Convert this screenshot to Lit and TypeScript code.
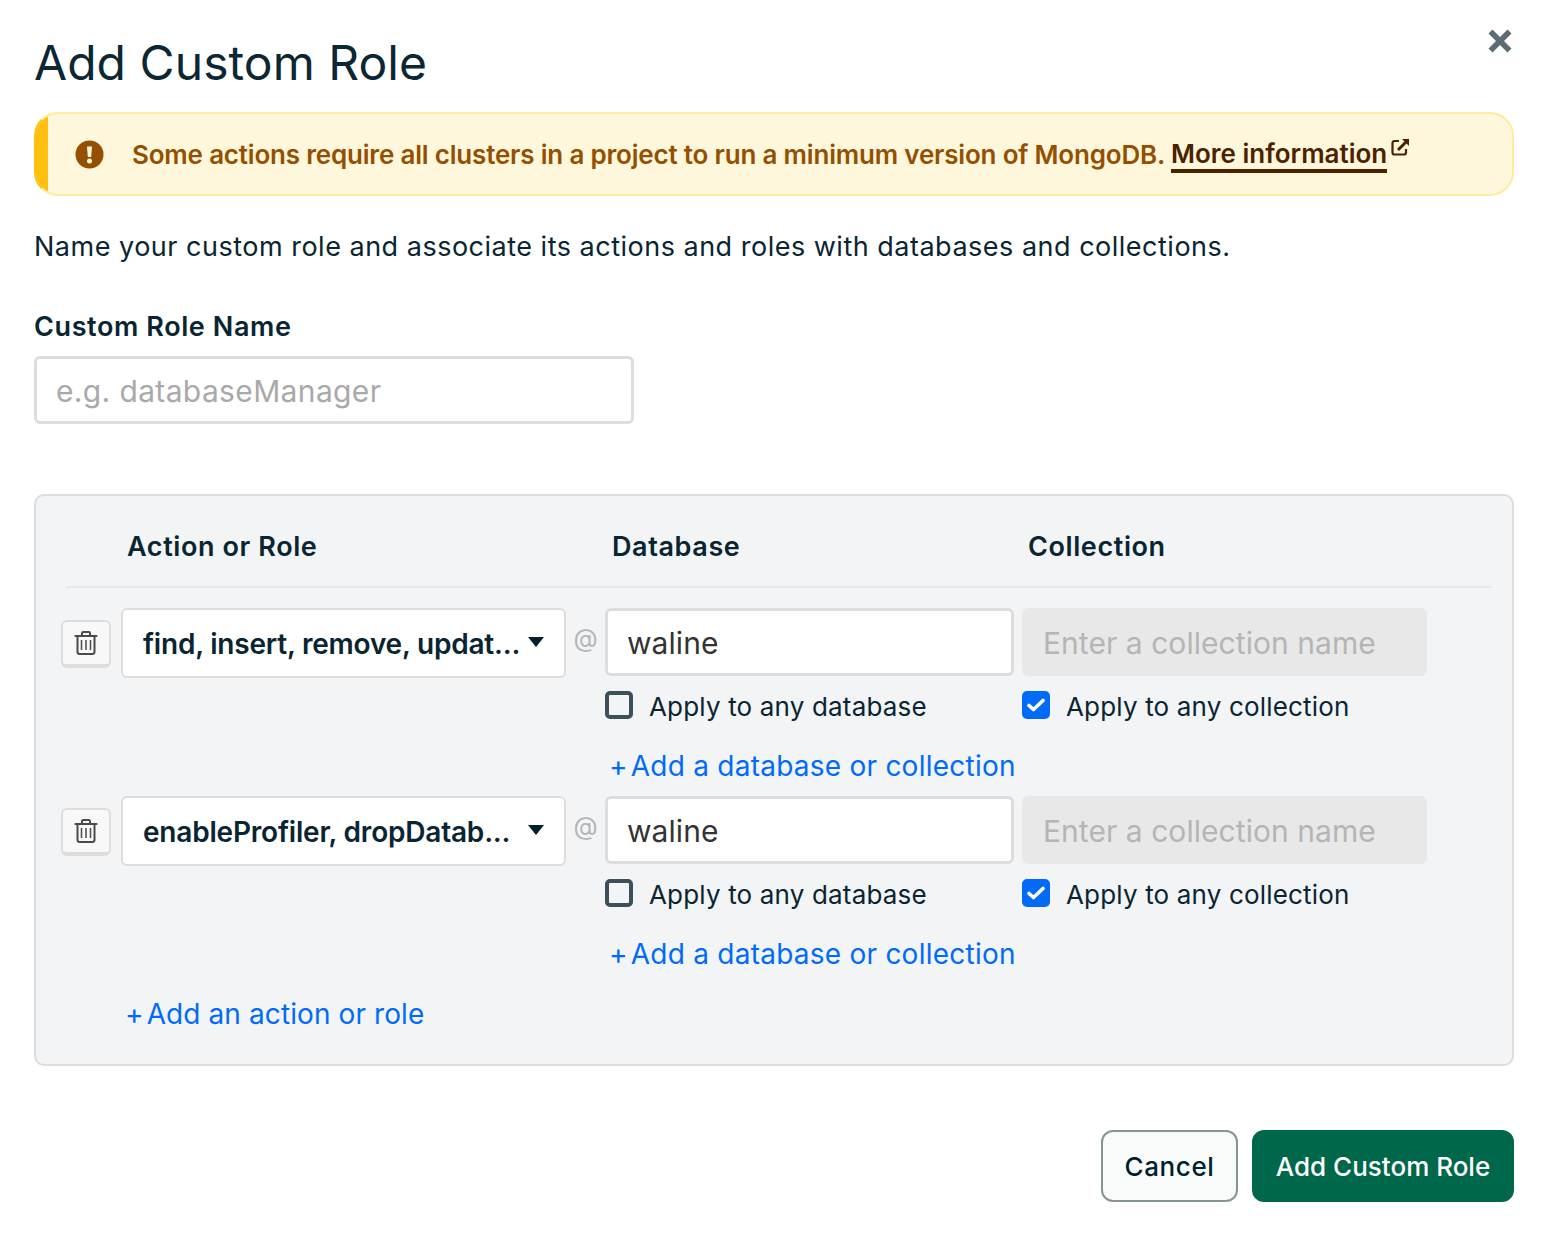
import { LitElement, html, css } from 'lit';
import { customElement, state } from 'lit/decorators.js';

const trash = html`<svg width="24" height="26" viewBox="0 0 24 26" fill="none" stroke="#4a4a4a" stroke-width="2">
  <path d="M1.500 6h21" stroke-width="2.200" stroke-linecap="round"/>
  <path d="M8 5.500V3.200C8 2.500 8.500 2 9.200 2h5.600c.7 0 1.200.5 1.200 1.200v2.300"/>
  <path d="M3.500 6.500v15.300c0 1.300 1 2.200 2.200 2.200h12.600c1.200 0 2.200-.9 2.200-2.200V6.500"/>
  <path d="M7.500 10v10M12 10v10M16.500 10v10" stroke-width="1.500"/>
</svg>`;

const caret = html`<svg class="caret" width="16" height="10" viewBox="0 0 16 10"><path d="M0 0h16L8 10z" fill="#001e2b"/></svg>`;

@customElement('app-root')
export class AppRoot extends LitElement {
  @state() rows = [
    { action: 'find, insert, remove, updat...' },
    { action: 'enableProfiler, dropDatab...' },
  ];

  static styles = css`
    :host {
      display: block;
      width: 1545px;
      height: 1241px;
      box-sizing: border-box;
      padding: 0 31px 0 34px;
      background: #fff;
      color: #0a2532;
      font-family: Inter, "Noto Sans", sans-serif;
      position: relative;
    }
    h1 {
      margin: 0;
      padding-top: 33px;
      height: 112px;
      box-sizing: border-box;
      font-size: 48px;
      line-height: 60px;
      font-weight: 400;
      letter-spacing: 0.05px;
      color: #0c2734;
    }
    .close {
      position: absolute;
      top: 28px;
      right: 32px;
      width: 26px;
      height: 26px;
    }
    .alert {
      height: 84px;
      box-sizing: border-box;
      border: 2px solid #ffec9e;
      border-left-color: #ffc010;
      border-radius: 24px;
      background: #fef7db;
      display: flex;
      align-items: center;
      overflow: hidden;
      font-size: 26px;
      font-weight: 600;
      color: #944f01;
      letter-spacing: -0.19px;
      white-space: nowrap;
    }
    .alert .bar { width: 12px; height: 100%; background: #ffc010; margin-right: 27px; flex: none; }
    .alert svg.warn { margin-right: 28px; flex: none; }
    .alert a {
      margin: 4px 0 0 6px;
      color: #4c2100;
      text-decoration: none;
      border-bottom: 4px solid #4c2100;
      line-height: 30px;
      letter-spacing: 0;
    }
    .alert .ext { margin: -14px 0 0 4px; flex: none; }
    .desc {
      margin: 34px 0 0;
      font-size: 27px;
      line-height: 34px;
      letter-spacing: 0.5px;
      white-space: nowrap;
    }
    .field-label {
      margin-top: 46px;
      font-size: 27px;
      line-height: 34px;
      font-weight: 600;
      letter-spacing: 0.6px;
    }
    input {
      box-sizing: border-box;
      font-family: inherit;
      font-size: 30px;
      letter-spacing: 0.05px;
      border: 3px solid #dddddd;
      border-radius: 6px;
      padding: 1px 19px 0;
      height: 68px;
      color: #333;
      background: #fff;
      outline: none;
    }
    input::placeholder { color: #a9a9a9; opacity: 1; }
    input:disabled { background: #e8e8e8; border-color: #e8e8e8; padding-left: 18px; }
    input:disabled::placeholder { color: #b5b5b5; }
    .name { width: 600px; margin-top: 12px; display: block; letter-spacing: 0.36px; }
    .panel {
      margin-top: 70px;
      width: 1480px;
      height: 572px;
      box-sizing: border-box;
      border: 2px solid #dddddd;
      border-radius: 10px;
      background: #f3f4f6;
      padding: 0 20px 0 25px;
    }
    .grid {
      display: grid;
      grid-template-columns: 60px 445px 39px 417px 405px;
    }
    .head {
      height: 92px;
      margin-left: 5px;
      border-bottom: 2px solid #e7e8ea;
      box-sizing: border-box;
      grid-template-columns: 61px 485px 416px 1fr;
      align-items: center;
      font-size: 27px;
      font-weight: 600;
      letter-spacing: 0.6px;
      padding-top: 11px;
    }
    .head span:nth-child(2) { grid-column: 2; }
    .row { margin-top: 20px; height: 168px; align-content: start; }
    .del {
      width: 50px;
      height: 48px;
      margin-top: 12px;
      box-sizing: border-box;
      border: 2px solid #dddddd;
      border-bottom-width: 4px;
      border-radius: 6px;
      background: #f8f8f8;
      display: flex;
      align-items: center;
      justify-content: center;
      padding: 0;
    }
    .select {
      height: 70px;
      box-sizing: border-box;
      border: 2px solid #dddddd;
      border-radius: 6px;
      background: #fff;
      display: flex;
      align-items: center;
      justify-content: space-between;
      padding: 2px 20px 0;
      font-size: 28px;
      font-weight: 600;
      letter-spacing: -0.2px;
      white-space: nowrap;
    }
    .caret { margin-top: -4px; flex: none; }
    .at {
      font-size: 25px;
      color: #b5b5b5;
      text-align: center;
      line-height: 60px;
    }
    .col { display: flex; flex-direction: column; }
    .col input { width: 100%; }
    .col.db input { width: 409px; }
    .check {
      margin-top: 14px;
      display: flex;
      align-items: center;
      height: 32px;
      font-size: 26px;
      letter-spacing: 0.17px;
    }
    .box {
      width: 28px;
      height: 28px;
      box-sizing: border-box;
      border: 4px solid #3d4f58;
      border-radius: 5px;
      margin: -2px 16px 0 0;
      flex: none;
    }
    .box.on {
      background: #016bf8;
      border-color: #016bf8;
      display: flex;
      align-items: center;
      justify-content: center;
    }
    .link {
      color: #016bf8;
      font-size: 28px;
      letter-spacing: 0.24px;
      line-height: 36px;
      white-space: nowrap;
    }
    .link .plus { margin-right: 3px; }
    .col .link { margin: 26px 0 0 4px; }
    .add-action { margin: 32px 0 0 64px; letter-spacing: 0.1px; }
    .footer {
      margin-top: 64px;
      display: flex;
      justify-content: flex-end;
      gap: 14px;
    }
    .btn {
      height: 72px;
      box-sizing: border-box;
      border-radius: 12px;
      font-family: inherit;
      font-size: 26px;
      font-weight: 500;
      letter-spacing: 0;
      padding: 0;
    }
    .cancel { width: 137px; border: 2px solid #889397; background: #f9fbfa; color: #001e2b; letter-spacing: 0.6px; }
    .primary { width: 262px; border: 2px solid #00684a; background: #00684a; color: #fff; }
  `;

  renderRow(row: { action: string }) {
    return html`
      <div class="grid row">
        <button class="del">${trash}</button>
        <div class="select"><span>${row.action}</span>${caret}</div>
        <div class="at">@</div>
        <div class="col db">
          <input value="waline" />
          <div class="check"><span class="box"></span>Apply to any database</div>
          <span class="link"><span class="plus">+</span>Add a database or collection</span>
        </div>
        <div class="col">
          <input disabled placeholder="Enter a collection name" />
          <div class="check">
            <span class="box on">
              <svg width="18" height="14" viewBox="0 0 18 14" fill="none" stroke="#fff" stroke-width="3.6" stroke-linecap="round" stroke-linejoin="round"><path d="M2 7.500l4.500 4L16 2.500"/></svg>
            </span>
            Apply to any collection
          </div>
        </div>
      </div>
    `;
  }

  render() {
    return html`
      <h1>Add Custom Role</h1>
      <svg class="close" viewBox="0 0 26 26" fill="#5d6c74">
        <path d="M5.500 1.500L13 9l7.500-7.500 4 4L17 13l7.500 7.500-4 4L13 17l-7.500 7.500-4-4L9 13 1.500 5.500z"/>
      </svg>
      <div class="alert">
        <span class="bar"></span>
        <svg class="warn" width="29" height="29" viewBox="0 0 29 29">
          <circle cx="14.500" cy="14.500" r="14" fill="#944f01"/>
          <path d="M12 6.500h5l-.8 10.500h-3.400z" fill="#fef7db"/>
          <circle cx="14.500" cy="21" r="2.500" fill="#fef7db"/>
        </svg>
        <span>Some actions require all clusters in a project to run a minimum version of MongoDB.</span>
        <a>More information</a>
        <svg class="ext" width="19" height="19" viewBox="0 0 19 19" fill="none" stroke="#4c2100" stroke-width="2.200">
          <path d="M8 3H3.500A2 2 0 0 0 1.500 5v9.500a2 2 0 0 0 2 2H13a2 2 0 0 0 2-2V11"/>
          <path d="M7 12L16 3" stroke-width="3"/>
          <path d="M11 1h7v7z" fill="#4c2100" stroke="none"/>
        </svg>
      </div>
      <p class="desc">Name your custom role and associate its actions and roles with databases and collections.</p>
      <div class="field-label">Custom Role Name</div>
      <input class="name" placeholder="e.g. databaseManager" />
      <div class="panel">
        <div class="grid head">
          <span></span>
          <span>Action or Role</span>
          <span>Database</span>
          <span>Collection</span>
        </div>
        ${this.rows.map((r) => this.renderRow(r))}
        <div class="link add-action"><span class="plus">+</span>Add an action or role</div>
      </div>
      <div class="footer">
        <button class="btn cancel">Cancel</button>
        <button class="btn primary">Add Custom Role</button>
      </div>
    `;
  }
}
